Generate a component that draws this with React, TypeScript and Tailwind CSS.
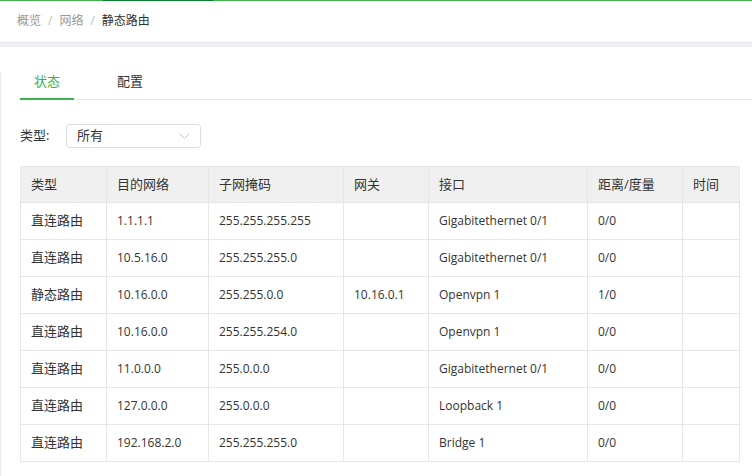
const rows = [
  ["直连路由", "1.1.1.1", "255.255.255.255", "", "Gigabitethernet 0/1", "0/0", ""],
  ["直连路由", "10.5.16.0", "255.255.255.0", "", "Gigabitethernet 0/1", "0/0", ""],
  ["静态路由", "10.16.0.0", "255.255.0.0", "10.16.0.1", "Openvpn 1", "1/0", ""],
  ["直连路由", "10.16.0.0", "255.255.254.0", "", "Openvpn 1", "0/0", ""],
  ["直连路由", "11.0.0.0", "255.0.0.0", "", "Gigabitethernet 0/1", "0/0", ""],
  ["直连路由", "127.0.0.0", "255.0.0.0", "", "Loopback 1", "0/0", ""],
  ["直连路由", "192.168.2.0", "255.255.255.0", "", "Bridge 1", "0/0", ""],
];

const columns = [
  { title: "类型", width: "w-[86px]" },
  { title: "目的网络", width: "w-[102px]" },
  { title: "子网掩码", width: "w-[135px]" },
  { title: "网关", width: "w-[85px]" },
  { title: "接口", width: "w-[159px]" },
  { title: "距离/度量", width: "w-[95px]" },
  { title: "时间", width: "w-[57px]" },
];

export default function App() {
  return (
    <div className="w-[752px] h-[476px] overflow-hidden bg-white text-[#333] font-['Open_Sans','Noto_Sans_CJK_SC',sans-serif]">
      {/* loading bar */}
      <div className="flex h-px">
        <div className="w-[103px] bg-[#3cb34a]" />
        <div className="w-[110px] bg-[#0b7d2f]" />
        <div className="flex-1 bg-[#3cb34a]" />
      </div>

      <div className="h-[41px] flex items-center pl-[17px] text-[12px] pb-[2px]">
        <span className="text-[#999]">概览</span>
        <span className="text-[#bbb] mx-[7px]">/</span>
        <span className="text-[#999]">网络</span>
        <span className="text-[#bbb] mx-[7px]">/</span>
        <span className="text-[#333]">静态路由</span>
      </div>
      <div className="h-[5px] bg-[#eff0f3] border-t border-[#e3e4e8]" />

      <div className="border-l border-[#ececec] h-full pl-[19px] text-[13px]">
        <div className="flex mt-[25px] border-b border-[#e6e6e6]">
          <div className="w-[54px] text-center text-[#3cb34a] pb-[8px] border-b-2 border-[#3cb34a] -mb-px leading-[18px]">
            状态
          </div>
          <div className="w-[54px] ml-[29px] text-center pb-[8px] leading-[18px]">配置</div>
        </div>

        <div className="flex items-center mt-[24px]">
          <span className="w-[46px]">类型:</span>
          <div className="w-[135px] h-[24px] border border-[#dcdfe6] rounded-[3px] flex items-center justify-between pl-[10px] pr-[10px]">
            <span>所有</span>
            <svg width="11" height="7" viewBox="0 0 11 7" fill="none">
              <polyline points="0.5,0.5 5.5,5.5 10.5,0.5" stroke="#c0c4cc" strokeWidth="1" />
            </svg>
          </div>
        </div>

        <table className="mt-[18px] w-[719px] border-collapse table-fixed">
          <thead>
            <tr className="bg-[#f0f0f0]">
              {columns.map((c) => (
                <th
                  key={c.title}
                  className={`${c.width} h-[36px] border border-[#e6e6e6] px-[10px] text-left font-normal`}
                >
                  {c.title}
                </th>
              ))}
            </tr>
          </thead>
          <tbody>
            {rows.map((r, i) => (
              <tr key={i}>
                {r.map((cell, j) => (
                  <td
                    key={j}
                    className={`h-[37px] border border-[#e6e6e6] px-[10px] ${j === 0 ? "text-[13px]" : "text-[12px]"}`}
                  >
                    {cell}
                  </td>
                ))}
              </tr>
            ))}
          </tbody>
        </table>
      </div>
    </div>
  );
}
